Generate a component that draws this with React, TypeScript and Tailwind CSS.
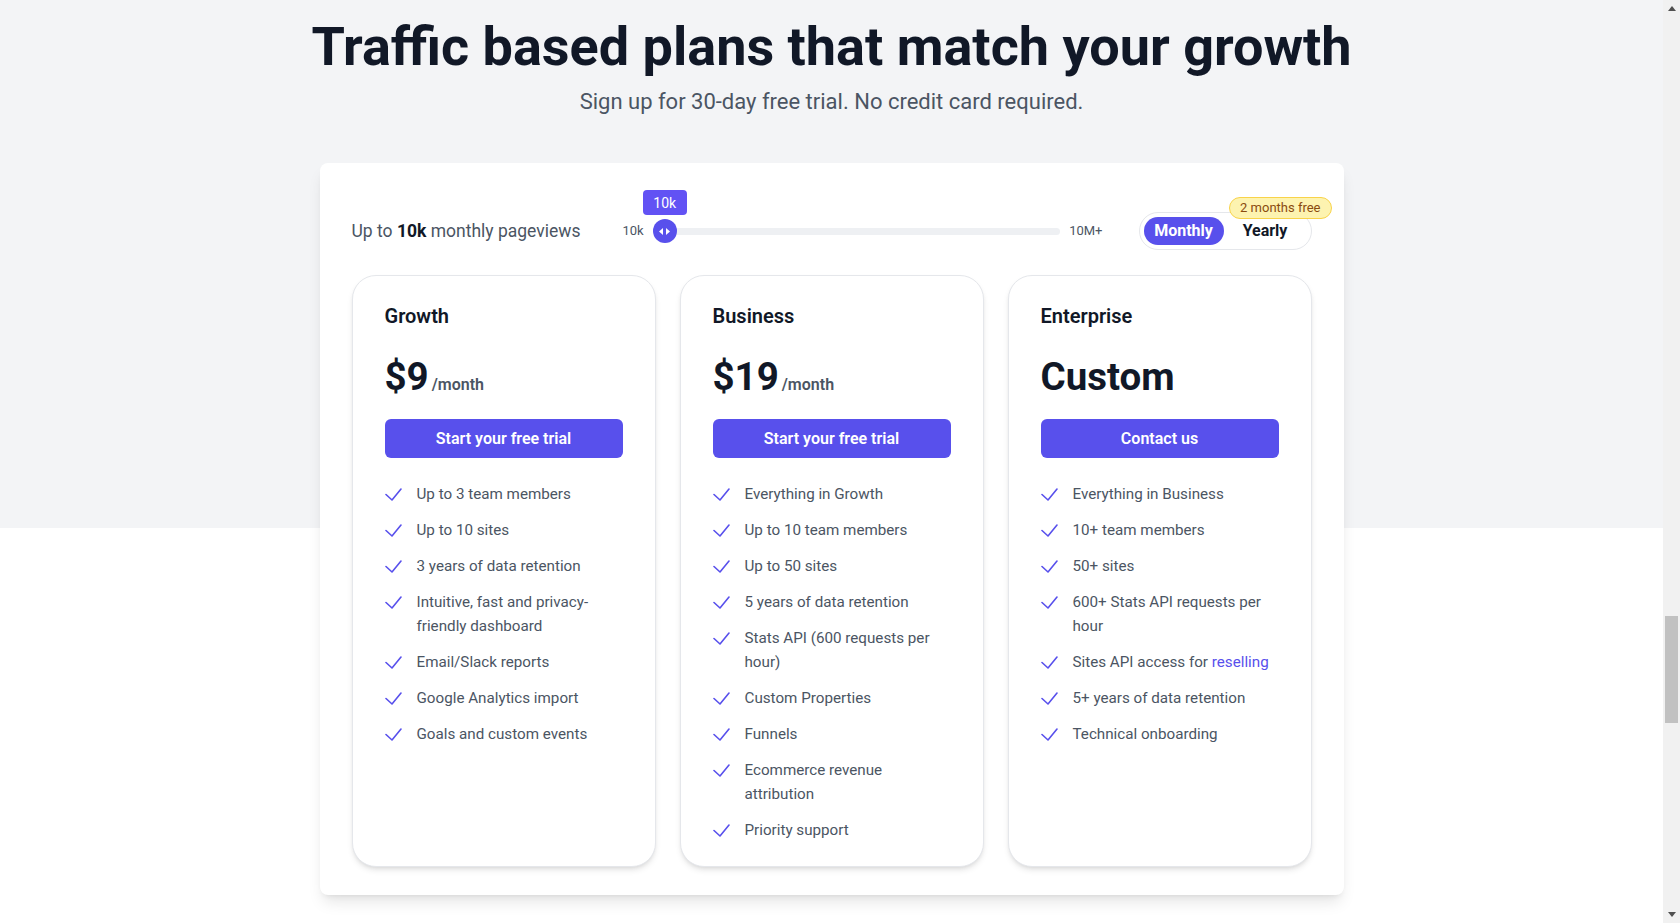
import React, { ReactNode } from "react";

interface Plan {
  name: string;
  price: string;
  perMonth: boolean;
  cta: string;
  features: ReactNode[];
}

const plans: Plan[] = [
  {
    name: "Growth",
    price: "$9",
    perMonth: true,
    cta: "Start your free trial",
    features: [
      "Up to 3 team members",
      "Up to 10 sites",
      "3 years of data retention",
      "Intuitive, fast and privacy-friendly dashboard",
      "Email/Slack reports",
      "Google Analytics import",
      "Goals and custom events",
    ],
  },
  {
    name: "Business",
    price: "$19",
    perMonth: true,
    cta: "Start your free trial",
    features: [
      "Everything in Growth",
      "Up to 10 team members",
      "Up to 50 sites",
      "5 years of data retention",
      "Stats API (600 requests per hour)",
      "Custom Properties",
      "Funnels",
      "Ecommerce revenue attribution",
      "Priority support",
    ],
  },
  {
    name: "Enterprise",
    price: "Custom",
    perMonth: false,
    cta: "Contact us",
    features: [
      "Everything in Business",
      "10+ team members",
      "50+ sites",
      "600+ Stats API requests per hour",
      <>
        Sites API access for <a className="text-[#5850ec]">reselling</a>
      </>,
      "5+ years of data retention",
      "Technical onboarding",
    ],
  },
];

function CheckIcon() {
  return (
    <svg width="18" height="16" viewBox="0 0 18 16" fill="none" className="mt-1 flex-shrink-0">
      <path d="M1 8.5 L7 14 L16 3" stroke="#5850ec" strokeWidth="1.6" strokeLinecap="round" strokeLinejoin="round" />
    </svg>
  );
}

function PlanCard({ plan }: { plan: Plan }) {
  return (
    <div className="rounded-3xl border border-[#e5e7eb] bg-white px-8 pt-[26px] pb-6 shadow-md">
      <h3 className="text-xl leading-7 font-semibold text-[#111827]">{plan.name}</h3>
      <div className="mt-[27px] flex h-10 items-baseline">
        <span className="text-[38.5px] leading-10 font-bold text-[#111827]">{plan.price}</span>
        {plan.perMonth && <span className="ml-[3px] text-base leading-none font-semibold text-[#4b5563]">/month</span>}
      </div>
      <button className="mt-[22px] h-[39px] w-full rounded-md bg-[#5850ec] text-base font-semibold text-white">
        {plan.cta}
      </button>
      <ul className="mt-6 space-y-3">
        {plan.features.map((f, i) => (
          <li key={i} className="flex gap-[14px] text-[15.2px] leading-6 text-[#4b5563]">
            <CheckIcon />
            <span>{f}</span>
          </li>
        ))}
      </ul>
    </div>
  );
}

function Scrollbar() {
  return (
    <div className="flex w-[17px] flex-col bg-[#f1f1f1]">
      <div className="flex h-[17px] items-center justify-center">
        <svg width="8" height="5" viewBox="0 0 8 5">
          <polygon points="0,5 4,0 8,5" fill="#505050" />
        </svg>
      </div>
      <div className="flex-1">
        <div className="mx-[2px] mt-[599px] h-[107px] bg-[#c1c1c1]" />
      </div>
      <div className="flex h-[17px] items-center justify-center">
        <svg width="8" height="5" viewBox="0 0 8 5">
          <polygon points="0,0 8,0 4,5" fill="#505050" />
        </svg>
      </div>
    </div>
  );
}

export default function App() {
  return (
    <div className="flex h-[923px] overflow-hidden font-['Roboto',sans-serif]">
      <main className="flex-1 bg-[linear-gradient(to_bottom,#f3f4f6_528px,#ffffff_528px)]">
        <div className="pt-[20px] text-center">
          <h1 className="text-[54px] leading-none font-bold text-[#111827]">
            Traffic based plans that match your growth
          </h1>
          <p className="mt-[14px] text-[22px] leading-7 text-[#4b5563]">
            Sign up for 30-day free trial. No credit card required.
          </p>
        </div>

        <div className="mx-auto mt-[47px] w-[1024px] rounded-lg bg-white px-8 pt-[49px] pb-7 shadow-lg">
          {/* pageviews slider + billing toggle */}
          <div className="flex h-[38px] items-center">
            <p className="w-[271px] text-[17.5px] text-[#4b5563]">
              Up to <span className="font-bold text-[#111827]">10k</span> monthly pageviews
            </p>
            <div className="mr-[36px] flex flex-1 items-center text-[13px] text-[#4b5563]">
              <span>10k</span>
              <div className="relative mx-[9px] flex h-6 flex-1 items-center">
                <div className="h-[7px] w-full rounded-full bg-[#eef0f3]" />
                <div className="absolute top-0 left-0 flex h-6 w-6 items-center justify-center rounded-full bg-[#5850ec]">
                  <svg width="11" height="7" viewBox="0 0 11 7">
                    <polygon points="0,3.5 4,0 4,7" fill="#fff" />
                    <polygon points="11,3.5 7,0 7,7" fill="#fff" />
                  </svg>
                  <div className="absolute bottom-[28px] left-1/2 flex h-[25px] w-[44px] -translate-x-1/2 items-center justify-center rounded bg-[#6252f4] text-sm text-white">
                    10k
                  </div>
                </div>
              </div>
              <span>10M+</span>
            </div>
            <div className="relative flex rounded-full border border-[#e5e7eb] p-1">
              <button className="h-7 w-20 rounded-full bg-[#5850ec] text-base font-bold text-white">Monthly</button>
              <button className="h-7 w-[83px] rounded-full text-base font-bold text-[#111827]">Yearly</button>
              <span className="absolute -top-[16px] -right-[21px] flex h-[22px] items-center rounded-full border border-[#f8d34a] bg-[#fdf3b0] px-[10px] text-[13px] text-[#8a4b0f]">
                2 months free
              </span>
            </div>
          </div>

          <div className="mt-[25px] grid grid-cols-3 gap-6">
            {plans.map((p) => (
              <PlanCard key={p.name} plan={p} />
            ))}
          </div>
        </div>
      </main>
      <Scrollbar />
    </div>
  );
}
